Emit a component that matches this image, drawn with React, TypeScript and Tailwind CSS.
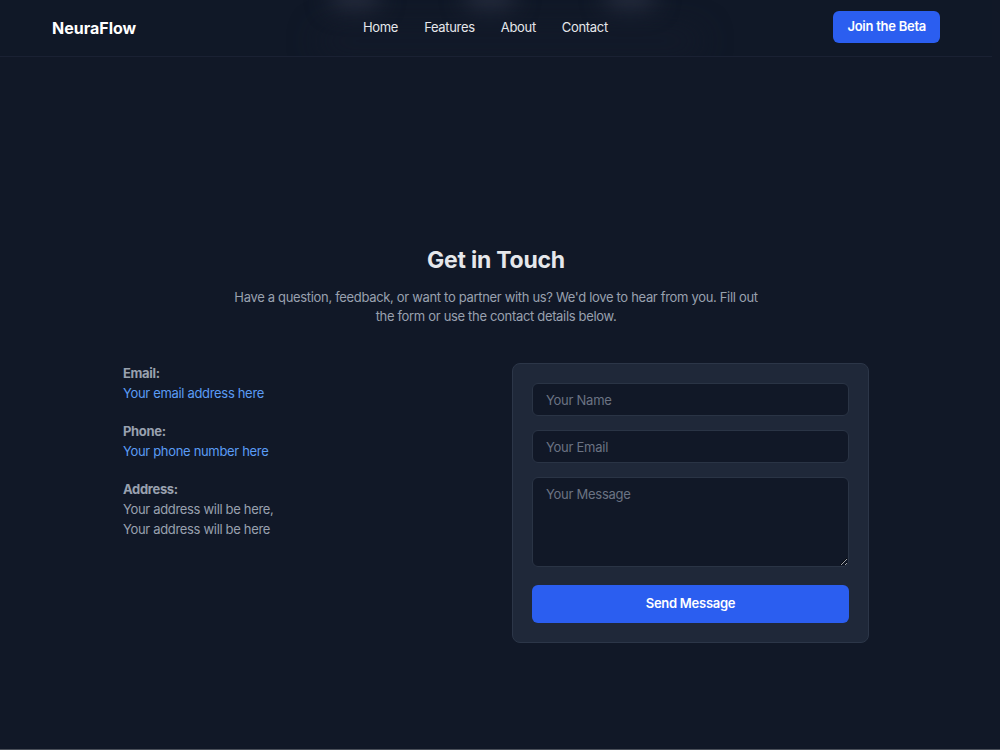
import React from "react";

const NAV_LINKS = ["Home", "Features", "About", "Contact"];

function Header() {
  return (
    <header className="relative h-[57px] overflow-hidden border-b border-[#1a2133] bg-[#111827]/95">
      <div className="pointer-events-none absolute inset-0">
        <div className="absolute left-[330px] top-[-14px] h-[22px] w-[50px] rounded-full bg-[#2a3042] blur-md" />
        <div className="absolute left-[465px] top-[-14px] h-[22px] w-[50px] rounded-full bg-[#2a3042] blur-md" />
        <div className="absolute left-[605px] top-[-14px] h-[22px] w-[50px] rounded-full bg-[#2a3042] blur-md" />
        <div className="absolute left-[320px] top-[34px] h-[14px] w-[380px] rounded-full bg-[#161c2c] blur-lg" />
      </div>
      <div className="relative flex h-14 items-center justify-between px-[52px]">
        <span className="text-base font-bold text-white">NeuraFlow</span>
        <nav className="absolute left-[363px] flex gap-[26px] text-[13px] tracking-[-0.025em] text-gray-200">
          {NAV_LINKS.map((link) => (
            <a key={link} href="#">
              {link}
            </a>
          ))}
        </nav>
        <button className="-mt-[2px] h-8 rounded-md bg-[#2b5ef0] px-[14px] text-[13px] font-semibold tracking-[-0.02em] text-white">
          Join the Beta
        </button>
      </div>
    </header>
  );
}

function ContactDetails() {
  return (
    <div className="flex flex-col gap-[18px] text-[13px] leading-5 tracking-[-0.025em]">
      <div>
        <p className="font-bold text-gray-400">Email:</p>
        <a href="#" className="text-[#5b9cf5]">
          Your email address here
        </a>
      </div>
      <div>
        <p className="font-bold text-gray-400">Phone:</p>
        <a href="#" className="text-[#5b9cf5]">
          Your phone number here
        </a>
      </div>
      <div>
        <p className="font-bold text-gray-400">Address:</p>
        <p className="text-gray-400">Your address will be here,</p>
        <p className="text-gray-400">Your address will be here</p>
      </div>
    </div>
  );
}

function ContactForm() {
  const field =
    "w-full rounded-md border border-[#2a3445] bg-[#111827] px-[13px] text-[13px] tracking-[-0.02em] text-gray-200 placeholder:text-[#6b7383] outline-none";

  return (
    <form
      className="flex flex-col rounded-lg border border-[#2c3648] bg-[#1f2839] p-[19px]"
      onSubmit={(e) => e.preventDefault()}
    >
      <input type="text" placeholder="Your Name" className={`${field} h-[33px]`} />
      <input type="email" placeholder="Your Email" className={`${field} mt-[14px] h-[33px]`} />
      <textarea placeholder="Your Message" className={`${field} mt-[14px] h-[90px] py-[7px]`} />
      <button
        type="submit"
        className="mt-[18px] h-[38px] rounded-md bg-[#2b5ef0] text-[13px] font-semibold tracking-[-0.02em] text-white"
      >
        Send Message
      </button>
    </form>
  );
}

export default function App() {
  return (
    <div
      className="min-h-screen bg-[#111827]"
      style={{ fontFamily: "Inter, 'Noto Sans', sans-serif" }}
    >
      <div className="w-[992px]">
        <Header />
        <section className="h-[692px] pt-[187px]">
          <h2 className="text-center text-[23px] font-bold leading-8 tracking-[-0.01em] text-gray-200">
            Get in Touch
          </h2>
          <p className="mx-auto mt-[12px] max-w-[540px] text-center text-[13px] leading-[19px] tracking-[-0.025em] text-gray-400">
            Have a question, feedback, or want to partner with us? We'd love to hear from you. Fill out
            the form or use the contact details below.
          </p>
          <div className="mx-auto mt-[37px] grid w-[746px] grid-cols-2 items-start gap-8">
            <ContactDetails />
            <ContactForm />
          </div>
        </section>
      </div>
      <div className="h-px w-full bg-[#4a4f59]" />
    </div>
  );
}
